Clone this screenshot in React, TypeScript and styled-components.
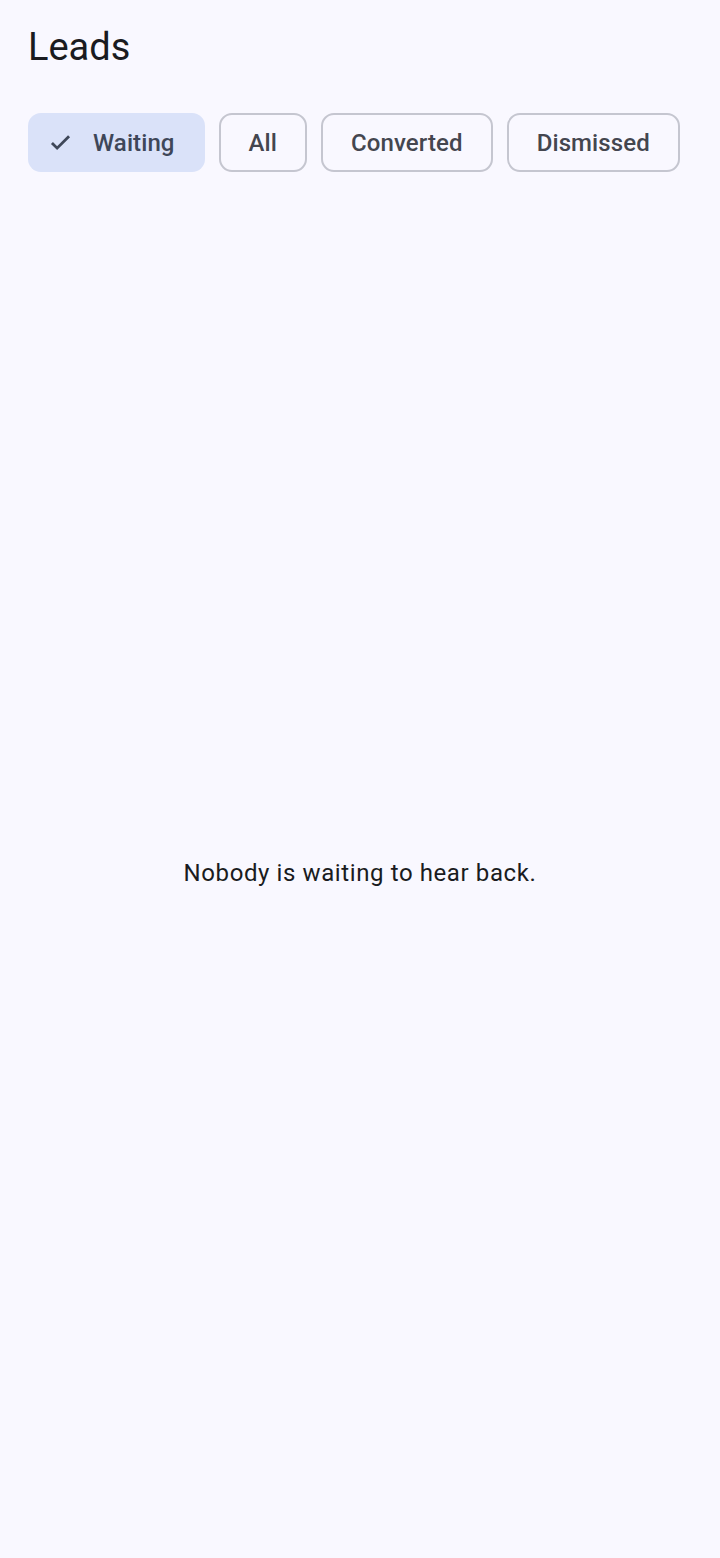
import React, { useState } from 'react';
import styled, { createGlobalStyle } from 'styled-components';

const GlobalStyle = createGlobalStyle`
  html, body {
    margin: 0;
    padding: 0;
    background: #f9f8ff;
  }
  body {
    font-family: Roboto, "Noto Sans", "Liberation Sans", sans-serif;
    color: #1a1b20;
  }
`

const Screen = styled.div`
  min-height: 100vh;
  display: flex;
  flex-direction: column;
  box-sizing: border-box;
  background: #f9f8ff;
`

const Title = styled.h1`
  margin: 0;
  padding: 22px 28px 0;
  font-size: 38px;
  font-weight: 400;
  line-height: 50px;
  color: #1a1b20;
`

const ChipRow = styled.div`
  display: flex;
  gap: 14px;
  padding: 41px 28px 16px;
`

const Chip = styled.button<{ selected: boolean }>`
  display: flex;
  align-items: center;
  gap: 19px;
  height: 59px;
  box-sizing: border-box;
  padding: ${({ selected }) => selected ? "0 28px 0 17px" : "0 28px"};
  border-radius: 13px;
  border: ${({ selected }) => selected ? "2px solid transparent" : "2px solid #c5c6d0"};
  background: ${({ selected }) => selected ? "#dae2f9" : "transparent"};
  color: ${({ selected }) => selected ? "#3e4759" : "#44464f"};
  font-family: Roboto, "Noto Sans", sans-serif;
  font-size: 24px;
  font-weight: 500;
  letter-spacing: 0.1px;
  cursor: pointer;
`

const Empty = styled.div`
  flex: 1;
  display: flex;
  align-items: center;
  justify-content: center;
  font-size: 24px;
  letter-spacing: 0.6px;
  color: #1a1b20;
`

const filters = ["Waiting", "All", "Converted", "Dismissed"]

function Check() {
  return (
    <svg width="27" height="27" viewBox="0 0 24 24" fill="none">
      <path d="M4.4 12.4L9 17 19.6 6.4" stroke="#3e4759" strokeWidth="2.5" />
    </svg>
  )
}

export default function App(): JSX.Element {
  const [filter, setFilter] = useState("Waiting")

  return (
    <Screen>
      <GlobalStyle />
      <Title>Leads</Title>
      <ChipRow>
        {filters.map(f => (
          <Chip key={f} selected={filter == f} onClick={() => setFilter(f)}>
            {filter == f && <Check />}
            {f}
          </Chip>
        ))}
      </ChipRow>
      <Empty>Nobody is waiting to hear back.</Empty>
    </Screen>
  )
}
